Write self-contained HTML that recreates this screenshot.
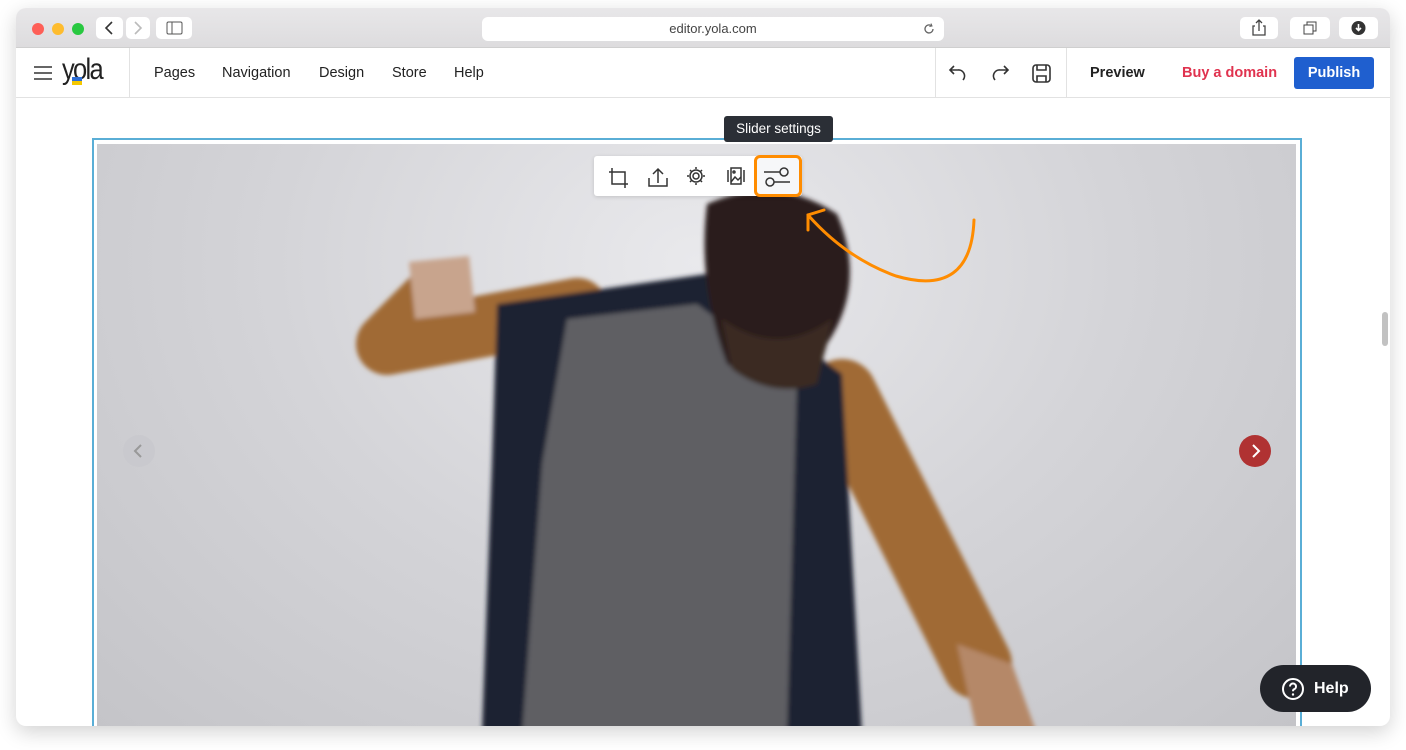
<!DOCTYPE html>
<html><head><meta charset="utf-8"><style>
*{margin:0;padding:0;box-sizing:border-box}
body{width:1406px;height:750px;background:#fff;font-family:"Liberation Sans",sans-serif;position:relative;overflow:hidden}
.win{position:absolute;left:16px;top:8px;width:1374px;height:718px;border-radius:10px;overflow:hidden;box-shadow:0 6px 20px rgba(0,0,0,.18);background:#fff}
.title{position:absolute;left:0;top:0;width:100%;height:40px;background:linear-gradient(#e8e7e9,#dddcde);border-bottom:1px solid #cfcfcf}
.dot{position:absolute;top:15px;width:12px;height:12px;border-radius:50%}
.btn{position:absolute;top:9px;height:22px;background:#fff;border-radius:5px}
.url{position:absolute;left:466px;top:9px;width:462px;height:24px;background:#fff;border-radius:6px;text-align:center;font-size:13px;line-height:24px;color:#444}
.bar{position:absolute;left:0;top:40px;width:100%;height:50px;border-bottom:1px solid #e2e2e2;background:#fff}
.nav{position:absolute;top:17px;font-size:14.5px;color:#222}
.vl{position:absolute;top:0;width:1px;height:50px;background:#e2e2e2}
</style></head><body>
<div class="win">
<div class="title">
<div class="dot" style="left:16px;background:#fe5f57"></div>
<div class="dot" style="left:36px;background:#febc2e"></div>
<div class="dot" style="left:56px;background:#28c840"></div>
<div class="btn" style="left:80px;width:27px"><svg width="27" height="22"><path d="M16 5l-6 6 6 6" stroke="#333" stroke-width="1.6" fill="none"/></svg></div>
<div class="btn" style="left:110px;width:24px"><svg width="24" height="22"><path d="M9 5l6 6-6 6" stroke="#bbb" stroke-width="1.6" fill="none"/></svg></div>
<div class="btn" style="left:140px;width:36px"><svg width="36" height="22"><rect x="11" y="5" width="15" height="12" rx="1.5" stroke="#555" fill="none"/><path d="M16 5v12" stroke="#555"/></svg></div>
<div class="url">editor.yola.com<svg style="position:absolute;right:8px;top:5px" width="14" height="14"><path d="M11 7a4 4 0 1 1-1.5-3.2" stroke="#666" fill="none" stroke-width="1.3"/><path d="M9 1.5l1 2.5-2.6.5" stroke="#666" fill="none"/></svg></div>
<div class="btn" style="left:1224px;width:38px"><svg width="38" height="22"><path d="M15 9h-2v9h12V9h-2M19 14V3M16 6l3-3 3 3" stroke="#444" fill="none" stroke-width="1.3"/></svg></div>
<div class="btn" style="left:1274px;width:40px"><svg width="40" height="22"><rect x="14" y="8" width="9" height="9" stroke="#444" fill="none"/><path d="M17 8V5h9v9h-3" stroke="#444" fill="none"/></svg></div>
<div class="btn" style="left:1323px;width:39px"><svg width="39" height="22"><circle cx="19.5" cy="11" r="7" fill="#333"/><path d="M19.5 7v6M17 11l2.5 2.5 2.5-2.5" stroke="#fff" stroke-width="1.6" fill="none"/></svg></div>
</div>
<div class="bar">
<svg style="position:absolute;left:17px;top:17px" width="20" height="16"><path d="M1 2h18M1 8h18M1 14h18" stroke="#333" stroke-width="1.6"/></svg>
<div style="position:absolute;left:46px;top:5px;font-size:30px;letter-spacing:-2px;color:#222;transform:scaleX(.85);transform-origin:left">yola</div>
<div style="position:absolute;left:56px;top:29px;width:10px;height:4px;background:#2d6ed6"></div><div style="position:absolute;left:56px;top:33px;width:10px;height:4px;background:#f5c800"></div>
<div class="vl" style="left:113px"></div>
<div class="nav" style="left:138px">Pages</div>
<div class="nav" style="left:206px">Navigation</div>
<div class="nav" style="left:303px">Design</div>
<div class="nav" style="left:376px">Store</div>
<div class="nav" style="left:438px">Help</div>
<div class="vl" style="left:919px"></div>
<svg style="position:absolute;left:930px;top:14px" width="120" height="24"><path d="M8 4L4 8l4 4M4 8h8a6 6 0 0 1 5 10" stroke="#333" stroke-width="1.6" fill="none"/><path d="M58 4l4 4-4 4M62 8h-8a6 6 0 0 0-5 10" stroke="#333" stroke-width="1.6" fill="none"/><rect x="87" y="3" width="17" height="17" rx="3" stroke="#333" stroke-width="1.6" fill="none"/><path d="M91 3v5h9V3M91 20v-6h9v6" stroke="#333" stroke-width="1.6" fill="none"/></svg>
<div class="vl" style="left:1050px"></div>
<div class="nav" style="left:1074px;font-weight:bold;color:#222">Preview</div>
<div class="nav" style="left:1166px;font-weight:bold;color:#e0334f">Buy a domain</div>
<div style="position:absolute;left:1278px;top:9px;width:80px;height:32px;background:#1f5fcf;border-radius:3px;color:#fff;font-weight:bold;font-size:14.5px;text-align:center;line-height:32px">Publish</div>
</div>
<div style="position:absolute;right:2px;top:304px;width:6px;height:34px;border-radius:3px;background:#c2c2c2"></div>
<div style="position:absolute;left:76px;top:130px;width:1210px;height:600px;border:2px solid #5aaed6;border-bottom:none"></div>
<div style="position:absolute;left:81px;top:136px;width:1199px;height:590px;overflow:hidden;background:radial-gradient(ellipse at 50% 20%,#e9e9ec,#d4d4d8 50%,#c4c4c8)">
<svg width="1199" height="590" style="position:absolute;left:0;top:0"><defs><filter id="b"><feGaussianBlur stdDeviation="2.5"/></filter></defs>
<g filter="url(#b)">
<path d="M480 165 L290 200 L340 150" stroke="#a06a36" stroke-width="62" fill="none" stroke-linecap="round" stroke-linejoin="round"/>
<path d="M745 250 L880 520" stroke="#a06a36" stroke-width="70" fill="none" stroke-linecap="round"/>
<path d="M312 118 L372 112 L378 168 L318 175Z" fill="#c8a48d"/>
<path d="M860 500 L915 520 L940 590 L880 590Z" fill="#b58868"/>
<path d="M400 160 L610 130 L745 230 L765 590 L385 590 L395 320Z" fill="#1d2233"/>
<path d="M470 175 L600 160 L700 235 L690 590 L425 590 L445 320Z" fill="#5f5f64"/>
<path d="M610 60 Q680 30 740 70 Q770 140 730 200 L720 235 Q680 250 630 220 Q600 140 610 60Z" fill="#2a1f1c"/>
<path d="M625 175 Q680 215 735 175 L720 240 Q675 255 635 225Z" fill="#3b2a24"/>
</g></svg>
<div style="position:absolute;left:26px;top:291px;width:32px;height:32px;border-radius:50%;background:rgba(200,200,205,.8)"><svg width="32" height="32"><path d="M18 10l-6 6 6 6" stroke="#999" stroke-width="2" fill="none"/></svg></div>
<div style="position:absolute;left:1142px;top:291px;width:32px;height:32px;border-radius:50%;background:#b03232"><svg width="32" height="32"><path d="M14 10l6 6-6 6" stroke="#fff" stroke-width="2" fill="none"/></svg></div>
</div>
<div style="position:absolute;left:708px;top:108px;width:109px;height:26px;background:#2b2f36;border-radius:3px;color:#fff;font-size:13.5px;text-align:center;line-height:26px">Slider settings</div>
<div style="position:absolute;left:578px;top:148px;width:208px;height:40px;background:#fff;border-radius:3px;box-shadow:0 1px 4px rgba(0,0,0,.15)">
<svg width="208" height="40"><g stroke="#333" stroke-width="1.5" fill="none">
<path d="M15 16h16v16M18 12v16h16"/>
<path d="M55 22v8h18v-8M64 27V13M59 18l5-5 5 5"/>
<circle cx="102" cy="20" r="3"/><path d="M102 11v2M102 27v2M93 20h2M109 20h2M96 14l1.5 1.5M106.5 24.5L108 26M96 26l1.5-1.5M106.5 15.5L108 14"/><circle cx="102" cy="20" r="6"/>
<path d="M134 14v12M150 14v12"/><rect x="137" y="12" width="10" height="16"/><circle cx="140" cy="16" r="1"/><path d="M137 26l4-5 3 3 3-3"/>
</g></svg>
<div style="position:absolute;left:160px;top:-1px;width:48px;height:42px;border:3px solid #ff8c00;border-radius:6px;background:#f6f7f9"><svg width="42" height="36"><g stroke="#333" stroke-width="1.5" fill="none"><circle cx="27" cy="14" r="4"/><path d="M7 14h16M17 24h16"/><circle cx="13" cy="24" r="4"/></g></svg></div>
</div>
<svg style="position:absolute;left:780px;top:190px" width="200" height="100"><path d="M178 22 Q175 100 100 78 Q50 60 12 17" stroke="#ff8c00" stroke-width="3" fill="none" stroke-linecap="round"/><path d="M28 12 L12 17 L12 32" stroke="#ff8c00" stroke-width="3" fill="none" stroke-linecap="round"/></svg>
<div style="position:absolute;left:1244px;top:657px;width:111px;height:47px;border-radius:24px;background:#22242a;color:#fff;font-weight:bold;font-size:16px;line-height:47px;padding-left:54px">Help<svg style="position:absolute;left:21px;top:12px" width="24" height="24"><circle cx="12" cy="12" r="10" stroke="#fff" stroke-width="2" fill="none"/><path d="M9 9.5a3 3 0 1 1 4 2.8c-1 .4-1 1-1 2" stroke="#fff" stroke-width="2" fill="none"/><circle cx="12" cy="17.5" r="1.2" fill="#fff"/></svg></div>
</div>
</body></html>
